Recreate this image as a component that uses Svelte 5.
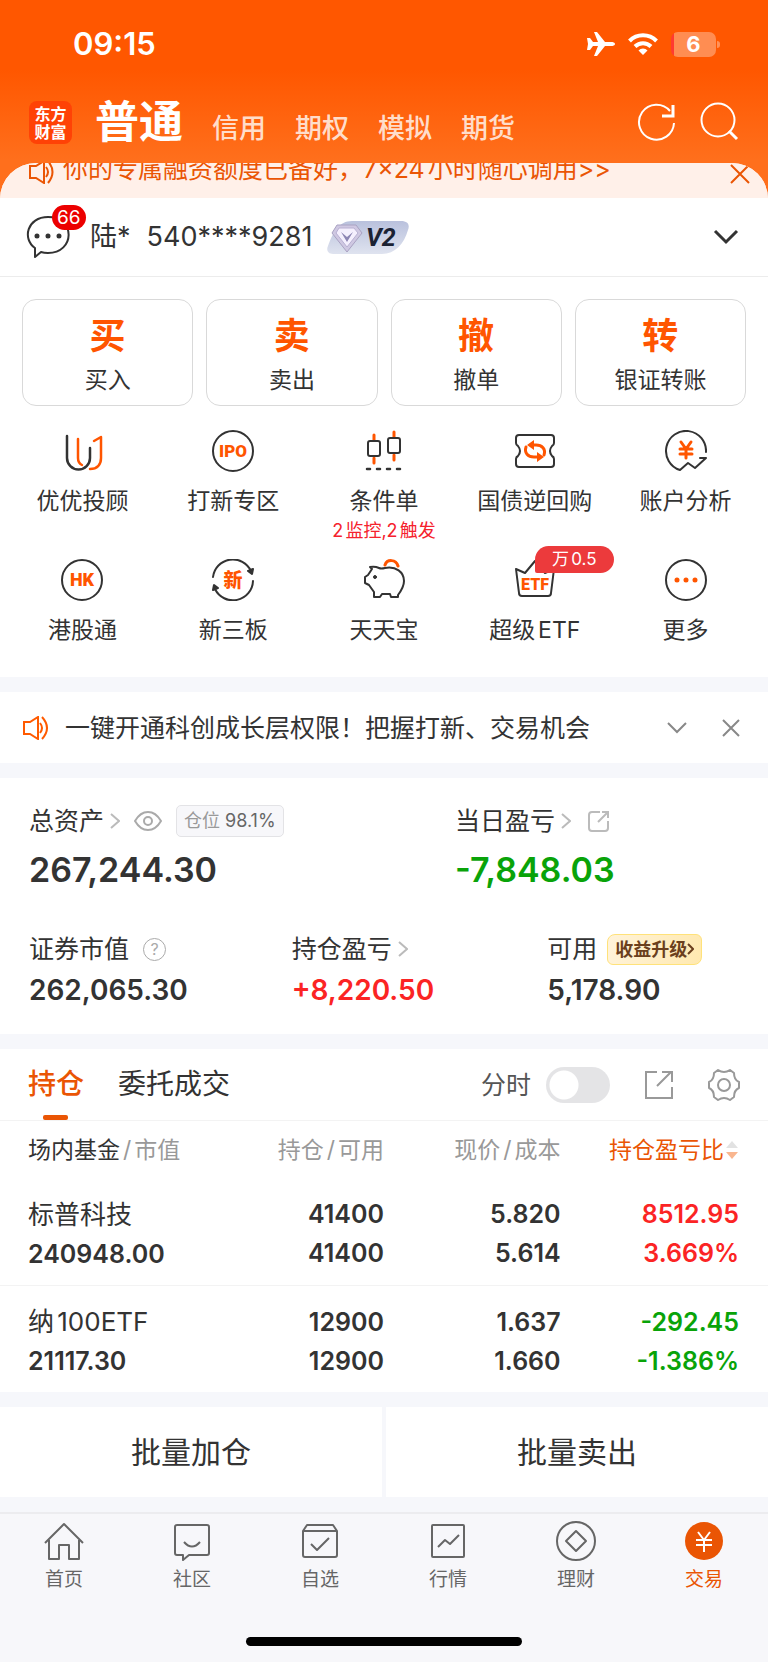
<script>
  let activeTop = $state('普通');
  let activeTab = $state('持仓');
  let minuteChart = $state(false);

  const topTabs = ['普通', '信用', '期权', '模拟', '期货'];

  const actions = [
    { mark: '买', label: '买入' },
    { mark: '卖', label: '卖出' },
    { mark: '撤', label: '撤单' },
    { mark: '转', label: '银证转账' }
  ];

  const services = [
    { icon: 'advisor', label: '优优投顾' },
    { icon: 'ipo', label: '打新专区' },
    { icon: 'candles', label: '条件单', note: '2监控,2触发' },
    { icon: 'ticket', label: '国债逆回购' },
    { icon: 'analysis', label: '账户分析' },
    { icon: 'hk', label: '港股通' },
    { icon: 'xin', label: '新三板' },
    { icon: 'piggy', label: '天天宝' },
    { icon: 'etf', label: '超级ETF', badge: '万0.5' },
    { icon: 'more', label: '更多' }
  ];

  const holdings = [
    { name: '标普科技', value: '240948.00', amount: '41400', usable: '41400', price: '5.820', cost: '5.614', profit: '8512.95', ratio: '3.669%', up: true },
    { name: '纳100ETF', value: '21117.30', amount: '12900', usable: '12900', price: '1.637', cost: '1.660', profit: '-292.45', ratio: '-1.386%', up: false }
  ];

  const navItems = [
    { icon: 'home', label: '首页' },
    { icon: 'community', label: '社区' },
    { icon: 'favorite', label: '自选' },
    { icon: 'market', label: '行情' },
    { icon: 'wealth', label: '理财' },
    { icon: 'trade', label: '交易', active: true }
  ];
</script>

{#snippet serviceIcon(name)}
  <svg class="service-icon" viewBox="0 0 42 42" fill="none" stroke="#333" stroke-width="2" stroke-linecap="round" stroke-linejoin="round" aria-hidden="true">
    {#if name === 'advisor'}
      <path class="medium" d="M6 6v22a11.5 11.5 0 0 0 23 0V18" />
      <path class="hot medium" d="M17 9v19c0 4 2 6 4 7M29 39c7 0 11-4 11-11V7L33 11" />
    {:else if name === 'ipo'}
      <circle cx="21" cy="21" r="20" />
      <text x="21" y="27" font-size="17">IPO</text>
    {:else if name === 'candles'}
      <path class="hot wick" d="M11 5v5M11 28v5M31 2v5M31 25v5" />
      <rect x="5" y="11" width="12" height="15" rx="2" />
      <rect x="25" y="8" width="12" height="15" rx="2" />
      <path class="medium" d="M4 39h3M14 39h3M24 39h3M34 39h3" />
    {:else if name === 'ticket'}
      <path d="M5 5h32q3 0 3 3v5q0 2-2 3-4 5 0 10 2 1 2 3v5q0 3-3 3H5q-3 0-3-3v-5q0-2 2-3 4-5 0-10-2-1-2-3V8q0-3 3-3z" />
      <path class="hot thick" d="M12 17c-2 6 2 10 8 10h5M30 25c2-6-2-10-8-10h-4" />
      <path class="fill-hot" d="M23 22l7 5-7 5zM20 10l-7 5 7 5z" />
    {:else if name === 'analysis'}
      <path d="M41 22A20 20 0 1 0 15 40l8-7 7 5 11-10h-6" />
      <path class="hot thick" d="M16 12l5 7 5-7M21 19v9M15 19h12M15 24h12" />
    {:else if name === 'hk'}
      <circle cx="21" cy="21" r="20" />
      <text x="21" y="27" font-size="18">HK</text>
    {:else if name === 'xin'}
      <path d="M1 18A20 20 0 0 1 39 12M41 22A20 20 0 0 1 3 30" />
      <path d="M36 12l4 3 1-5zM6 29l-4-3-1 5z" fill="#333" />
      <text x="21" y="28" font-size="19">新</text>
    {:else if name === 'piggy'}
      <path d="M7 8q5-1 9 1 2 1 6 0c11-2 19 4 19 13 0 6-3 10-6 14v2h-7l-1-3h-8l-2 3h-6v-5l-5-7-4-2v-6l3-2 4-6z" />
      <circle cx="12" cy="18" r="1.5" fill="#333" stroke-width="1" />
      <path class="hot thick" d="M22 6c2-6 11-6 13 1" />
    {:else if name === 'etf'}
      <path d="M2 10l9 4L21 2l10 12 9-4-3 24q0 3-3 3H8q-3 0-3-3z" />
      <text x="21" y="31" font-size="16">ETF</text>
    {:else}
      <circle cx="21" cy="21" r="20" />
      <path class="hot dots" d="M12 21h0M21 21h0M30 21h0" />
    {/if}
  </svg>
{/snippet}

{#snippet navIcon(name)}
  <svg class="nav-icon" viewBox="0 0 40 40" fill="none" stroke="#666" stroke-width="2" stroke-linejoin="round" aria-hidden="true">
    {#if name === 'home'}
      <path d="M1 22L20 3l19 19M5 19v19h10V24h10v14h10V19" />
    {:else if name === 'community'}
      <path d="M5 4h30q2 0 2 2v26q0 2-2 2H17l-6 5v-5H5q-2 0-2-2V6q0-2 2-2zM12 21q8 9 16 0" />
    {:else if name === 'favorite'}
      <path d="M3 10l4-6h26l4 6v24q0 2-2 2H5q-2 0-2-2zM3 10h34M11 23l6 6 12-12" />
    {:else if name === 'market'}
      <rect x="4" y="4" width="32" height="32" rx="1" />
      <path d="M10 26l7-7 5 4 9-9" />
    {:else if name === 'wealth'}
      <circle cx="20" cy="20" r="19" />
      <path d="M20 10l10 10-10 10-10-10z" />
    {:else}
      <circle cx="20" cy="20" r="19" fill="#ea5504" stroke="none" />
      <path d="M14 11l6 8 6-8M20 19v12M12 19h16M12 24h16" stroke="#fff" />
    {/if}
  </svg>
{/snippet}

{#snippet chevron()}
  <svg class="chevron" viewBox="0 0 10 16" fill="none" stroke="#bbb" stroke-width="2" aria-hidden="true"><path d="M1 1l8 7-8 7" /></svg>
{/snippet}

<div class="page">
  <div class="status">
    <span class="clock">09:15</span>
    <div class="signals">
      <svg width="28" height="26" viewBox="0 0 28 26" fill="#fff" aria-hidden="true">
        <path d="M28 13c0 1.5-2 2-4 2h-6L10 25H7l4-10H6l-3 4H0l1-6-1-6h3l3 4h5L7 1h3l8 10h6c2 0 4 .5 4 2z" />
      </svg>
      <svg width="30" height="22" viewBox="0 0 30 22" fill="none" stroke="#fff" stroke-width="4" aria-hidden="true">
        <path d="M1.5 8a19 19 0 0 1 27 0M7 13.5a11.5 11.5 0 0 1 16 0" />
        <path d="M10.5 17.5a6 6 0 0 1 9 0L15 22z" fill="#fff" stroke="none" />
      </svg>
      <span class="battery">6</span>
    </div>
  </div>

  <header class="header">
    <div class="logo">东方<br />财富</div>
    <nav class="top-tabs">
      {#each topTabs as tab}
        <button class:active={activeTop === tab} onclick={() => (activeTop = tab)}>{tab}</button>
      {/each}
    </nav>
    <button class="head-btn" aria-label="刷新">
      <svg width="40" height="40" viewBox="0 0 40 40" fill="none" stroke="#fff" stroke-width="2" aria-hidden="true">
        <path d="M38 21a17.5 17.5 0 1 1-4-12" />
        <path d="M37 3v11H26" stroke-width="3" />
      </svg>
    </button>
    <button class="head-btn" aria-label="搜索">
      <svg width="40" height="40" viewBox="0 0 40 40" fill="none" stroke="#fff" stroke-width="2" aria-hidden="true">
        <circle cx="19" cy="18" r="16.5" />
        <path d="M30 29l8 8" stroke-width="3" />
      </svg>
    </button>
  </header>

  <main class="sheet">
    <div class="promo">
      <svg width="25" height="24" viewBox="0 0 25 24" fill="none" stroke="#ea5504" stroke-width="2" aria-hidden="true">
        <path d="M1 6h6l8-5v22l-8-5H1zM17 7q4 5 0 10M19 1q9 11 0 22" />
      </svg>
      <a href="#promo">你的专属融资额度已备好，7×24小时随心调用&gt;&gt;</a>
      <button aria-label="关闭推广">
        <svg width="20" height="20" viewBox="0 0 20 20" fill="none" stroke="#ea5504" stroke-width="2" aria-hidden="true"><path d="M1 1l18 18M19 1L1 19" /></svg>
      </button>
    </div>

    <div class="account">
      <button class="message" aria-label="消息">
        <svg width="44" height="44" viewBox="0 0 44 44" fill="none" stroke="#333" stroke-width="2" stroke-linejoin="round" aria-hidden="true">
          <path d="M9 33C-4 24 1 2 22 2c28 0 27 36 0 36q-4 0-7-1l-6 5z" />
          <path d="M11 21h0M22 21h0M33 21h0" stroke-width="5" stroke-linecap="round" />
        </svg>
        <span class="count">66</span>
      </button>
      <span class="holder">陆*</span>
      <span class="number">540****9281</span>
      <svg class="level" width="82" height="33" viewBox="0 0 82 33" aria-label="V2">
        <defs>
          <linearGradient id="level" x1="0" y1="0" x2="0" y2="1">
            <stop offset="0" stop-color="#b9c1dd" />
            <stop offset="1" stop-color="#dfe3ef" />
          </linearGradient>
        </defs>
        <path d="M25 0h49c7 0 9 4 7 9-4 14-13 24-26 24H6c-5 0-7-4-5-8C6 11 12 0 25 0z" fill="url(#level)" />
        <path d="M10 4h19l6 8-15 19L5 12z" fill="#cfc8e2" stroke="#a9a2c2" />
        <path d="M12 7h15l4 5-11 14L9 12z" fill="#f4effd" stroke="#b8b0d2" />
        <path d="M14 11l6 5 6-5-6 10z" fill="#8d86b4" />
        <text x="39" y="25" font-family="Roboto, sans-serif" font-size="25" font-weight="700" font-style="italic" fill="#1b2233">V2</text>
      </svg>
      <button class="expand" aria-label="展开账户">
        <svg width="26" height="16" viewBox="0 0 26 16" fill="none" stroke="#333" stroke-width="3" aria-hidden="true"><path d="M2 2l11 11L24 2" /></svg>
      </button>
    </div>

    <div class="actions">
      {#each actions as action}
        <button class="action">
          <span class="mark">{action.mark}</span>
          <span class="label">{action.label}</span>
        </button>
      {/each}
    </div>

    <div class="services">
      {#each services as item}
        <a class="service" href="#{item.icon}">
          {@render serviceIcon(item.icon)}
          {#if item.badge}<span class="service-badge">{item.badge}</span>{/if}
          <span class="label">{item.label}</span>
          {#if item.note}<span class="note">{item.note}</span>{/if}
        </a>
      {/each}
    </div>

    <section class="notice">
      <svg width="26" height="24" viewBox="0 0 26 24" fill="none" stroke="#ff5a00" stroke-width="2" aria-hidden="true">
        <path d="M1 6h6l8-5v22l-8-5H1zM17 7q4 5 0 10M19 1q10 11 0 22" />
      </svg>
      <p>一键开通科创成长层权限！把握打新、交易机会</p>
      <button aria-label="展开公告">
        <svg width="20" height="20" viewBox="0 0 20 20" fill="none" stroke="#888" stroke-width="2" aria-hidden="true"><path d="M1 5l9 9 9-9" /></svg>
      </button>
      <button aria-label="关闭公告">
        <svg width="18" height="18" viewBox="0 0 18 18" fill="none" stroke="#888" stroke-width="2" aria-hidden="true"><path d="M1 1l16 16M17 1L1 17" /></svg>
      </button>
    </section>

    <section class="assets">
      <div class="totals">
        <div>
          <div class="caption">
            总资产{@render chevron()}
            <svg class="eye" width="28" height="20" viewBox="0 0 28 20" fill="none" stroke="#aaa" stroke-width="2" aria-hidden="true">
              <path d="M1 10c7-12 19-12 26 0-7 12-19 12-26 0z" /><circle cx="14" cy="10" r="4" />
            </svg>
            <span class="position">仓位 <b>98.1%</b></span>
          </div>
          <div class="big">267,244.30</div>
        </div>
        <div>
          <div class="caption">
            当日盈亏{@render chevron()}
            <svg class="share" width="22" height="22" viewBox="0 0 22 22" fill="none" stroke="#bbb" stroke-width="2" aria-hidden="true">
              <path d="M12 2H4Q1 2 1 5v13q0 3 3 3h13q3 0 3-3v-7M10 12L20 2M14 2h6v6" />
            </svg>
          </div>
          <div class="big down">-7,848.03</div>
        </div>
      </div>
      <div class="details">
        <div>
          <div class="caption">
            证券市值
            <span class="help">?</span>
          </div>
          <div class="mid">262,065.30</div>
        </div>
        <div>
          <div class="caption">持仓盈亏{@render chevron()}</div>
          <div class="mid up">+8,220.50</div>
        </div>
        <div>
          <div class="caption">
            可用
            <a class="upgrade" href="#upgrade">收益升级<svg width="7" height="14" viewBox="0 0 7 14" fill="none" stroke="#6b3f1d" stroke-width="2" aria-hidden="true"><path d="M1 2l5 5-5 5" /></svg></a>
          </div>
          <div class="mid">5,178.90</div>
        </div>
      </div>
    </section>

    <section class="positions">
      <div class="toolbar">
        {#each ['持仓', '委托成交'] as tab}
          <button class="tab" class:active={activeTab === tab} onclick={() => (activeTab = tab)}>{tab}</button>
        {/each}
        <label class="minute">
          分时
          <input type="checkbox" bind:checked={minuteChart} />
        </label>
        <button class="tool" aria-label="分享">
          <svg width="28" height="28" viewBox="0 0 28 28" fill="none" stroke="#999" stroke-width="2" aria-hidden="true">
            <path d="M12 1H1v26h26V16M12 15L26 1M17 1h10v10" />
          </svg>
        </button>
        <button class="tool" aria-label="设置">
          <svg width="32" height="32" viewBox="0 0 32 32" fill="none" stroke="#999" stroke-width="2" stroke-linejoin="round" aria-hidden="true">
            <path d="M10 1q6 4 12 0l4 3q0 7 5 9v6q-5 2-5 9l-4 3q-6-4-12 0l-4-3q0-7-5-9v-6q5-2 5-9z" />
            <circle cx="16" cy="16" r="6" />
          </svg>
        </button>
      </div>

      <table>
        <thead>
          <tr>
            <th><span class="dark">场内基金</span><span class="slash">/</span>市值</th>
            <th>持仓<span class="slash">/</span>可用</th>
            <th>现价<span class="slash">/</span>成本</th>
            <th class="sorted">持仓盈亏比<svg width="14" height="20" viewBox="0 0 14 20" aria-hidden="true"><path d="M7 1l6 7H1z" fill="#e2e2e2" /><path d="M7 19l6-7H1z" fill="#f9b68f" /></svg></th>
          </tr>
        </thead>
        <tbody>
          {#each holdings as row}
            <tr>
              <td><span class="name">{row.name}</span><br />{row.value}</td>
              <td>{row.amount}<br />{row.usable}</td>
              <td>{row.price}<br />{row.cost}</td>
              <td class={row.up ? 'up' : 'down'}>{row.profit}<br />{row.ratio}</td>
            </tr>
          {/each}
        </tbody>
      </table>
    </section>

    <div class="batch">
      <button>批量加仓</button>
      <button>批量卖出</button>
    </div>
  </main>

  <footer class="tabbar">
    <nav>
      {#each navItems as item}
        <a href="#{item.icon}" class:active={item.active}>
          {@render navIcon(item.icon)}
          {item.label}
        </a>
      {/each}
    </nav>
    <div class="home-bar"></div>
  </footer>
</div>

<style>
  :global(body) {
    margin: 0;
    background: #f7f7fa;
  }

  .page {
    font-family: Inter, "Noto Sans CJK SC", sans-serif;
    line-height: 1.2;
    color: #333;
    background: linear-gradient(#ff5700 0, #ff5700 70px, #ff6f1c 160px, #ff6f1c 240px, #f6f7fb 240px);
    text-autospace: normal;
  }

  button {
    padding: 0;
    border: none;
    background: none;
    font: inherit;
    color: inherit;
    cursor: pointer;
  }

  a {
    color: inherit;
    text-decoration: none;
  }

  svg {
    display: block;
    flex: none;
  }

  .up { color: #fb2424; }
  .down { color: #09a309; }

  /* status bar */
  .status {
    display: flex;
    align-items: center;
    justify-content: space-between;
    height: 88px;
    padding: 0 52px 0 73px;
    color: #fff;
  }

  .clock {
    font-size: 31px;
    font-weight: 600;
  }

  .signals {
    display: flex;
    align-items: center;
    gap: 13px;
  }

  .battery {
    position: relative;
    width: 45px;
    height: 25px;
    border-radius: 7px;
    background: linear-gradient(90deg, #ff3b30 3px, rgba(255, 255, 255, 0.32) 3px);
    font-size: 22px;
    line-height: 25px;
    font-weight: 700;
    text-align: center;
  }

  .battery::after {
    content: '';
    position: absolute;
    right: -4px;
    top: 9px;
    width: 3px;
    height: 7px;
    border-radius: 0 3px 3px 0;
    background: rgba(255, 255, 255, 0.35);
  }

  /* header */
  .header {
    display: flex;
    align-items: center;
    height: 68px;
    padding: 0 29px 7px;
    color: #fff;
  }

  .logo {
    width: 43px;
    padding: 4px 0 3px;
    border-radius: 8px;
    background: #ff4206;
    font-size: 16px;
    line-height: 18px;
    font-weight: 700;
    text-align: center;
  }

  .top-tabs {
    flex: 1;
    display: flex;
    align-items: baseline;
    gap: 29px;
    margin: 6px 0 0 23px;
  }

  .top-tabs button {
    font-size: 27px;
    line-height: 60px;
    font-weight: 500;
    color: rgba(255, 255, 255, 0.8);
  }

  .top-tabs .active {
    font-size: 44px;
    font-weight: 700;
    color: #fff;
  }

  .head-btn + .head-btn {
    margin-left: 23px;
  }

  .sheet {
    overflow: hidden;
    border-radius: 36px 36px 0 0;
    background: #f6f7fb;
  }

  .promo {
    display: flex;
    align-items: flex-end;
    height: 21px;
    padding: 0 18px 14px 29px;
    background: #fff0e9;
    color: #ea5504;
    font-size: 25px;
    line-height: 30px;
  }

  .promo a {
    flex: 1;
    margin-left: 9px;
  }

  /* account */
  .account {
    display: flex;
    align-items: center;
    height: 78px;
    padding: 0 29px 0 26px;
    border-bottom: 1px solid #ececec;
    background: #fff;
    font-size: 27px;
  }

  .message {
    position: relative;
  }

  .count {
    position: absolute;
    left: 26px;
    top: -10px;
    padding: 0 5px;
    border-radius: 13px;
    background: #ec0000;
    color: #fff;
    font-size: 19px;
    line-height: 25px;
  }

  .holder {
    margin-left: 20px;
  }

  .number {
    margin-left: 16px;
  }

  .level {
    margin-left: 15px;
  }

  .expand {
    margin-left: auto;
  }

  /* actions */
  .actions {
    display: grid;
    grid-template-columns: repeat(4, 1fr);
    gap: 13px;
    padding: 22px 22px 0;
    background: #fff;
  }

  .action {
    display: flex;
    flex-direction: column;
    align-items: center;
    gap: 8px;
    padding: 16px 0 9px;
    border: 1px solid #d9d9d9;
    border-radius: 14px;
  }

  .mark {
    color: #ff5500;
    font-size: 36px;
    line-height: 40px;
    font-weight: 700;
  }

  .label {
    font-size: 23px;
    line-height: 32px;
    white-space: nowrap;
  }

  .services {
    display: grid;
    grid-template-columns: repeat(5, 1fr);
    grid-template-rows: 129px 118px;
    padding: 24px 7px 0;
    background: #fff;
  }

  .service {
    position: relative;
    display: flex;
    flex-direction: column;
    align-items: center;
  }

  .service .label {
    margin-top: 13px;
  }

  .service-icon {
    width: 42px;
    height: 42px;
  }

  .service-icon .hot {
    stroke: #ff5500;
  }

  .service-icon .medium {
    stroke-width: 2.5;
  }

  .service-icon .wick,
  .service-icon .thick {
    stroke-width: 3;
  }

  .service-icon .dots {
    stroke-width: 5;
  }

  .service-icon .fill-hot {
    fill: #ff5500;
    stroke: none;
  }

  .service-icon text {
    fill: #ff5500;
    stroke: none;
    font-family: Roboto, "Noto Sans CJK SC", sans-serif;
    font-weight: 900;
    text-anchor: middle;
  }

  .note {
    color: #f5222d;
    font-size: 18px;
    line-height: 28px;
    white-space: nowrap;
  }

  .service-badge {
    position: absolute;
    left: 50%;
    top: -13px;
    width: 79px;
    border-radius: 14px 14px 14px 2px;
    background: #ec3a3c;
    color: #fff;
    font-size: 17px;
    line-height: 27px;
    text-align: center;
  }

  /* notice */
  .notice {
    display: flex;
    align-items: center;
    gap: 35px;
    height: 71px;
    margin: 15px 0;
    padding: 0 28px 0 23px;
    background: #fff;
    font-size: 25px;
  }

  .notice p {
    flex: 1;
    margin: 0 0 0 -19px;
  }

  /* assets */
  .assets {
    padding: 22px 29px 24px;
    background: #fff;
  }

  .totals {
    display: grid;
    grid-template-columns: 3fr 2fr;
  }

  .details {
    display: grid;
    grid-template-columns: 37% 36% 27%;
    margin-top: 30px;
  }

  .caption {
    display: flex;
    align-items: center;
    height: 42px;
    font-size: 25px;
    white-space: nowrap;
  }

  .chevron {
    width: 10px;
    height: 16px;
    margin-left: 6px;
  }

  .eye {
    margin-left: 14px;
  }

  .share {
    margin-left: 17px;
  }

  .position {
    margin-left: 14px;
    padding: 0 7px;
    border: 1px solid #e3e3e6;
    border-radius: 5px;
    background: #f7f7fa;
    color: #999;
    font-size: 18px;
    line-height: 30px;
  }

  .position b {
    color: #666;
    font-weight: 400;
  }

  .big {
    font-size: 34px;
    line-height: 56px;
    font-weight: 600;
  }

  .mid {
    font-size: 28px;
    line-height: 40px;
    font-weight: 600;
  }

  .help {
    width: 21px;
    margin-left: 14px;
    border: 1px solid #aaa;
    border-radius: 50%;
    color: #aaa;
    font-size: 16px;
    line-height: 21px;
    text-align: center;
  }

  .upgrade {
    display: flex;
    align-items: center;
    margin-left: 10px;
    padding: 0 7px;
    border: 1px solid #ffe27a;
    border-radius: 8px 6px 8px 6px;
    background: linear-gradient(100deg, #fff3da, #ffe9b0);
    color: #6b3f1d;
    font-size: 18px;
    line-height: 29px;
    font-weight: 700;
  }

  /* positions */
  .positions {
    margin-top: 15px;
    background: #fff;
  }

  .toolbar {
    display: flex;
    align-items: center;
    height: 71px;
    padding: 0 28px;
    border-bottom: 1px solid #f3f3f3;
    font-size: 28px;
  }

  .tab {
    position: relative;
    height: 71px;
    margin-right: 34px;
  }

  .tab.active {
    color: #ea5504;
    font-weight: 500;
  }

  .tab.active::after {
    content: '';
    position: absolute;
    left: calc(50% - 13px);
    bottom: 0;
    width: 25px;
    height: 5px;
    border-radius: 2px;
    background: #ea5504;
  }

  .minute {
    display: flex;
    align-items: center;
    gap: 15px;
    margin-left: auto;
    color: #555;
    font-size: 25px;
  }

  .minute input {
    appearance: none;
    width: 64px;
    height: 36px;
    margin: 0;
    border-radius: 18px;
    background: radial-gradient(circle at 18px 18px, #fff 14px, #e4e4e6 15px);
  }

  .minute input:checked {
    background: radial-gradient(circle at 46px 18px, #fff 14px, #ea5504 15px);
  }

  .tool {
    margin-left: 35px;
  }

  table {
    width: 100%;
    border-collapse: collapse;
    table-layout: fixed;
  }

  th,
  td {
    box-sizing: border-box;
    width: 23%;
    padding: 0;
    text-align: right;
    white-space: nowrap;
  }

  th:first-child,
  td:first-child {
    width: 27%;
    padding-left: 28px;
    text-align: left;
  }

  th:last-child,
  td:last-child {
    width: 27%;
    padding-right: 29px;
  }

  th {
    height: 57px;
    padding-top: 2px;
    color: #999;
    font-size: 23px;
    font-weight: 400;
  }

  th .dark {
    color: #333;
  }

  .slash {
    margin: 0 3px;
  }

  th.sorted {
    color: #ea5504;
  }

  .sorted svg {
    display: inline-block;
    margin-left: 1px;
    vertical-align: -2px;
  }

  td {
    height: 107px;
    padding-top: 6px;
    font-size: 25px;
    line-height: 39px;
    font-weight: 600;
  }

  tbody tr + tr {
    border-top: 1px solid #f3f3f3;
  }

  .name {
    font-size: 26px;
    font-weight: 400;
  }

  .batch {
    display: grid;
    grid-template-columns: 1fr 1fr;
    gap: 4px;
    margin: 15px 0;
  }

  .batch button {
    height: 90px;
    background: #fff;
    font-size: 30px;
  }

  /* tab bar */
  .tabbar {
    padding-bottom: 15px;
    border-top: 2px solid #ececef;
    background: #f7f7fa;
  }

  .tabbar nav {
    display: grid;
    grid-template-columns: repeat(6, 1fr);
    padding-top: 7px;
  }

  .tabbar a {
    display: flex;
    flex-direction: column;
    align-items: center;
    gap: 4px;
    color: #666;
    font-size: 19px;
    line-height: 30px;
  }

  .tabbar .active {
    color: #ea5504;
  }

  .nav-icon {
    width: 40px;
    height: 40px;
  }

  .home-bar {
    width: 36%;
    height: 9px;
    margin: 42px auto 0;
    border-radius: 5px;
    background: #000;
  }
</style>
